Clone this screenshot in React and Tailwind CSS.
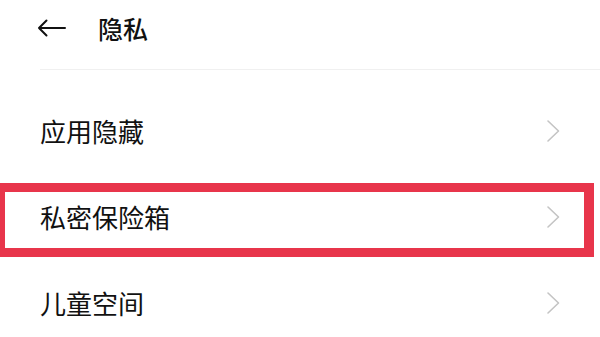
import React from "react";

const font = { fontFamily: '"Noto Sans CJK SC", "Noto Sans", sans-serif' };

function Chevron() {
  return (
    <svg width="14" height="24" viewBox="0 0 14 24" fill="none" className="block">
      <path d="M2 2 L12.5 12 L2 22" stroke="#c4c4c4" strokeWidth="1.6" strokeLinecap="round" strokeLinejoin="round" />
    </svg>
  );
}

function Row({ label, highlighted }) {
  return (
    <div className="relative h-[86px] flex items-center justify-between pl-[40px] pr-[40px]">
      <span className="text-[26px] leading-none text-[#111]">{label}</span>
      <Chevron />
      {highlighted && (
        <div className="absolute left-[-4px] right-[6px] top-[9px] h-[74px] border-[9px] border-r-[10px] border-[#e8354b] pointer-events-none" />
      )}
    </div>
  );
}

export default function App() {
  return (
    <div className="w-[600px] h-[337px] bg-white overflow-hidden" style={font}>
      <div className="h-[56px] flex items-center pl-[37px]">
        <svg width="29" height="18" viewBox="0 0 29 18" fill="none" className="block">
          <path d="M28 9 H2 M9.5 1.5 L2 9 L9.5 16.5" stroke="#111" strokeWidth="2" strokeLinecap="round" strokeLinejoin="round" />
        </svg>
        <span className="ml-[32px] text-[25px] leading-none font-medium text-[#111]">隐私</span>
      </div>
      <div className="mt-[13px] ml-[40px] h-px bg-[#f0f0f0]" />
      <div className="pt-[18px]">
        <Row label="应用隐藏" />
        <Row label="私密保险箱" highlighted />
        <Row label="儿童空间" />
      </div>
    </div>
  );
}
